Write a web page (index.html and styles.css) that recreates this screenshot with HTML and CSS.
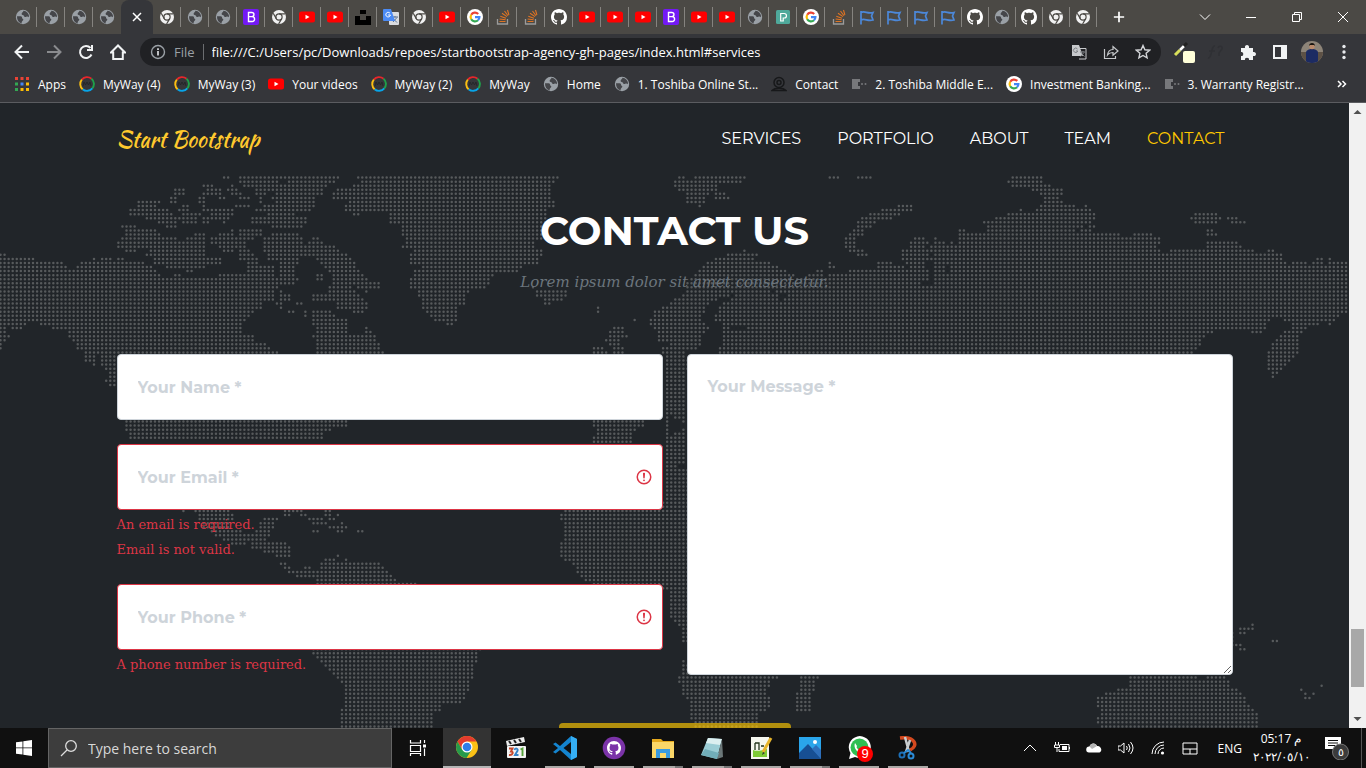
FILE: index.html
```html
<!DOCTYPE html>
<html lang="en">
<head>
<meta charset="utf-8">
<meta name="viewport" content="width=device-width, initial-scale=1">
<title>Agency - Start Bootstrap Theme</title>
<link rel="stylesheet" href="styles.css">
</head>
<body>
<svg class="sprite" aria-hidden="true">
  <symbol id="globe" viewBox="0 0 16 16"><circle cx="8" cy="8" r="7.2" fill="#9aa0a6"/><path d="M2 7.2h3.600c1.300 0 1.500 1 1.500 1.800s1.200.6 1.200 1.600c0 1.400-1.600 1.100-1.700 3.800C3.700 13.500 1.800 11 2 7.200zM8.300 1.800C8.600 3.400 6.500 3.300 6.600 5c.1 1.300 2 .7 2.400 2 .3 1.200 1.500 1.200 2.300.8 1-.5 2-.2 2.700.5A6 6 0 0 0 8.300 1.800z" fill="#45464a"/></symbol>
  <symbol id="chrome-white" viewBox="0 0 16 16"><circle cx="8" cy="8" r="7" fill="#f1f1f1"/><circle cx="8" cy="8" r="3.100" fill="none" stroke="#4b4945" stroke-width="1.200"/><path d="M8 4.900h6.200M5.300 9.600L2.200 4.200M10.700 9.600L7.600 15" stroke="#4b4945" stroke-width="1.200"/></symbol>
  <symbol id="chrome" viewBox="0 0 24 24"><circle cx="12" cy="12" r="11" fill="#fbc116"/><path d="M2.500 6.500A11 11 0 0 1 21.500 6.500H12L7.200 14.800z" fill="#e33b2e"/><path d="M2.500 6.500A11 11 0 0 0 11.500 23L16.700 14.700 7.200 14.700z" fill="#269a4b"/><circle cx="12" cy="12" r="5.500" fill="#fff"/><circle cx="12" cy="12" r="4.300" fill="#2f7de9"/></symbol>
  <symbol id="yt" viewBox="0 0 16 16"><rect y="2.500" width="16" height="11" rx="2.500" fill="#f00"/><path d="M6.500 5.700v4.600L10.500 8z" fill="#fff"/></symbol>
  <symbol id="boot" viewBox="0 0 16 16"><rect width="16" height="16" rx="2" fill="#7319f5"/><path d="M5.500 3.500h3.200c3 0 3 4.100 0 4.100H5.500zM5.500 7.600h3.600c3.300 0 3.300 4.900 0 4.900H5.500z" fill="none" stroke="#fff" stroke-width="1.400"/></symbol>
  <symbol id="unsplash" viewBox="0 0 16 16"><path d="M5 1h6v4H5zM0 7h5v4h6V7h5v9H0z" fill="#000"/></symbol>
  <symbol id="translate" viewBox="0 0 16 16"><rect x="6" y="3" width="10" height="13" rx="1" fill="#dadce0"/><path d="M9 8h6M12 7v1.500M10 13l4-4.500M10.500 10l3.500 3.500" stroke="#5b7290" fill="none"/><path d="M1 0h7l4 12H1a1 1 0 0 1-1-1V1a1 1 0 0 1 1-1z" fill="#4b8bf5"/><path d="M7 4.300A2.300 2.300 0 1 0 7.400 6H5.200" fill="none" stroke="#fff"/></symbol>
  <symbol id="google" viewBox="0 0 16 16"><circle cx="8" cy="8" r="8" fill="#fff"/><g fill="none" stroke-width="2.200"><path d="M4.200 5.800A4.400 4.400 0 0 1 11.200 5" stroke="#ea4335"/><path d="M4.200 5.800a4.400 4.400 0 0 0 0 4.400" stroke="#fbbc05"/><path d="M4.200 10.200A4.400 4.400 0 0 0 11 11.200" stroke="#34a853"/><path d="M8 8.200h4.400A4.400 4.400 0 0 1 11 11.200" stroke="#4285f4"/></g></symbol>
  <symbol id="stack" viewBox="0 0 16 16"><path d="M2.500 10v5h10v-5" fill="none" stroke="#9b9b9b" stroke-width="1.300"/><path d="M4.500 12.500h6M4.600 10l6 .8M5.300 7.200l5.700 2M7 4.200l5 3.400M9.500 2l3.500 4.800M12.500 1l1.400 5" stroke="#e07423" stroke-width="1.100"/></symbol>
  <symbol id="github" viewBox="0 0 16 16"><path fill="currentColor" d="M8 0C3.580 0 0 3.580 0 8c0 3.540 2.290 6.530 5.470 7.590.4.070.55-.17.55-.38 0-.19-.01-.82-.01-1.490-2.010.37-2.530-.49-2.690-.94-.09-.23-.48-.94-.82-1.130-.28-.15-.68-.52-.01-.53.63-.01 1.080.58 1.230.82.72 1.210 1.870.87 2.330.66.070-.52.28-.87.51-1.070-1.780-.2-3.640-.89-3.640-3.950 0-.87.31-1.590.82-2.150-.08-.2-.36-1.020.08-2.120 0 0 .67-.21 2.200.82.64-.18 1.320-.27 2-.27s1.360.09 2 .27c1.530-1.040 2.200-.82 2.200-.82.44 1.100.16 1.920.08 2.120.51.56.82 1.270.82 2.150 0 3.070-1.870 3.750-3.650 3.950.29.25.54.73.54 1.480 0 1.070-.01 1.930-.01 2.200 0 .21.15.46.55.38A8.010 8.010 0 0 0 16 8c0-4.420-3.580-8-8-8z"/></symbol>
  <symbol id="pexel" viewBox="0 0 16 16"><rect x="1" y="1" width="14" height="14" rx="1.500" fill="#4fa99b"/><path d="M5.700 12V4.500h3.500c3 0 3 4.500 0 4.500H8.200v3z" fill="none" stroke="#fff" stroke-width="1.200"/></symbol>
  <symbol id="flag" viewBox="0 0 16 16"><path d="M2 15.500V2M2 3.500c4-2 6 1.500 12 0L12.500 7l1.500 4c-6 1.500-8-2-12 0" fill="none" stroke="#4c88d9" stroke-width="1.700"/></symbol>
  <symbol id="myway" viewBox="0 0 16 16"><g fill="none" stroke-width="1.900"><path d="M2.800 3.600A6.900 6.900 0 0 1 12.500 2.700" stroke="#e6262b"/><path d="M12.500 2.700a6.900 6.900 0 0 1 .8 9.700" stroke="#1fa04a"/><path d="M13.300 12.400a6.900 6.900 0 0 1-9.700.8" stroke="#08a4e8"/><path d="M3.600 13.200a6.900 6.900 0 0 1-.8-9.600" stroke="#fbbf12"/></g><path d="M4 10l1-4 1.500 3L8 6l1.500 3L11 6l1 4" fill="none" stroke="#26272a"/></symbol>
  <symbol id="toshiba" viewBox="0 0 16 16"><path d="M1 3h8v3H7v4h2v3H1z" fill="#77787b"/><circle cx="11" cy="8" r="1" fill="#77787b"/><circle cx="14.500" cy="8" r="1" fill="#77787b"/></symbol>
  <symbol id="cam" viewBox="0 0 16 16"><g fill="none" stroke="#17181a" stroke-width="1.500"><circle cx="8" cy="6.500" r="5"/><circle cx="8" cy="6.500" r="2"/><path d="M1 14.500c3-3 11-3 14 0z"/></g></symbol>
  <symbol id="alert" viewBox="0 0 12 12"><g fill="none" stroke="#dc3545"><circle cx="6" cy="6" r="4.500"/><path stroke-linejoin="round" d="M5.800 3.600h.4L6 6.500z"/></g><circle cx="6" cy="8.200" r=".6" fill="#dc3545"/></symbol>
</svg>

<header class="browser">
  <div class="tabstrip">
    <div class="tabs" id="tabs"></div>
    <button class="newtab" aria-label="New tab"><svg viewBox="0 0 14 14"><path d="M7 1v12M1 7h12" stroke="#fff" stroke-width="2"/></svg></button>
    <div class="winctl">
      <button aria-label="Search tabs"><svg viewBox="0 0 12 12"><path d="M1 3.500l5 5 5-5"/></svg></button>
      <button aria-label="Minimize"><svg viewBox="0 0 12 12"><path d="M1 6.500h10"/></svg></button>
      <button aria-label="Restore"><svg viewBox="0 0 12 12"><path d="M1.500 3.500h7v7h-7zM3.500 3.500v-2h7v7h-2"/></svg></button>
      <button aria-label="Close"><svg viewBox="0 0 12 12"><path d="M1 1l10 10M11 1L1 11"/></svg></button>
    </div>
  </div>

  <div class="toolbar">
    <button class="tool" aria-label="Back"><svg viewBox="0 0 16 16"><path d="M15 8H2M8 1.500L1.500 8 8 14.500"/></svg></button>
    <button class="tool dim" aria-label="Forward"><svg viewBox="0 0 16 16"><path d="M1 8h13M8 1.500L14.500 8 8 14.500"/></svg></button>
    <button class="tool" aria-label="Reload"><svg viewBox="0 0 16 16"><path d="M13.500 10.500A6 6 0 1 1 12.500 4M14 1v5H9"/></svg></button>
    <button class="tool" aria-label="Home"><svg viewBox="0 0 16 16"><path d="M1 8.500L8 1.500l7 7h-2.200V15H3.200V8.500z"/></svg></button>
    <div class="omnibox">
      <svg class="info" viewBox="0 0 16 16"><circle cx="8" cy="8" r="6.500" fill="none" stroke="#9aa0a6" stroke-width="1.400"/><path d="M8 7v4.500M8 4.300v1.600" stroke="#e8eaed" stroke-width="1.600"/></svg>
      <span class="scheme">File</span>
      <input class="url" aria-label="Address" value="file:///C:/Users/pc/Downloads/repoes/startbootstrap-agency-gh-pages/index.html#services">
      <button class="act" aria-label="Translate"><svg viewBox="0 0 16 16"><path d="M1 1h7l4 11H1z" fill="#c7c9cc"/><path d="M6 4.500H15v10.500H8" fill="none" stroke="#c7c9cc"/><path d="M6.500 5A2.200 2.200 0 1 0 6.800 7H5M9 8h5M12 7v1M9.500 12.500L13 8.500M10.500 9.500l3 3" stroke="#7d8084" fill="none"/></svg></button>
      <button class="act" aria-label="Share"><svg viewBox="0 0 16 16"><path d="M1.500 5v9.500h11V12M4.500 11c.5-4 2.500-5.500 5.500-5.500V2.500L15 7l-5 4.200V8.500c-2.500 0-4 .5-5.500 2.500z" fill="none" stroke="#c7c9cc" stroke-width="1.200"/></svg></button>
      <button class="act" aria-label="Bookmark"><svg viewBox="0 0 16 16"><path d="M8 1.500l1.900 4.300 4.700.4-3.500 3.100 1 4.600L8 11.500l-4.100 2.400 1-4.600L1.400 6.200l4.700-.4z" fill="none" stroke="#d3d5d8" stroke-width="1.400"/></svg></button>
    </div>
    <div class="exts">
      <button aria-label="Colour picker"><svg viewBox="0 0 22 22"><path d="M2 14L7 9" stroke="#d9e05a" stroke-width="3"/><path d="M7 9l4-4" stroke="#fff" stroke-width="2.500"/><path d="M11 5l3-3" stroke="#222" stroke-width="3"/><rect x="10" y="10" width="12" height="12" rx="2" fill="#ffffd9"/></svg></button>
      <button aria-label="Math extension"><svg viewBox="0 0 22 22"><path d="M3 17c4 1 3-13 7-12M4 10h6M13 7c1-3 5-2 4 1l-3 4v3" fill="none" stroke="#2f3034" stroke-width="1.500"/></svg></button>
      <button aria-label="Extensions"><svg viewBox="0 0 22 22"><path d="M4 7h4c-1-4 5-4 4 0h4v4c4-1 4 5 0 4v4h-4c1-3-5-3-4 0H4v-4c3 1 3-5 0-4z" fill="#f1f3f4"/></svg></button>
      <button aria-label="Side panel"><svg viewBox="0 0 22 22"><path d="M4 4h14v14H4z" fill="#f1f3f4"/><path d="M6 6h6v10H6z" fill="#35363a"/></svg></button>
      <button aria-label="Profile"><svg viewBox="0 0 22 22"><clipPath id="face"><circle cx="11" cy="11" r="11"/></clipPath><g clip-path="url(#face)"><path d="M0 0h22v22H0z" fill="#8d8478"/><path d="M0 11h22v11H0z" fill="#5d5145"/><path d="M5 22V12c0-3 3-4 6-4s6 1 6 4v10z" fill="#1c2b63"/><circle cx="11" cy="5.500" r="2.700" fill="#b98a6c"/><path d="M8 5c0-4 6-4 6 0l-1-1H9z" fill="#17130f"/></g></svg></button>
      <button aria-label="Menu"><svg viewBox="0 0 22 22"><g fill="#e8eaed"><circle cx="11" cy="5.500" r="1.700"/><circle cx="11" cy="11" r="1.700"/><circle cx="11" cy="16.500" r="1.700"/></g></svg></button>
    </div>
  </div>

  <nav class="bookmarks" aria-label="Bookmarks">
    <a href="#apps"><svg viewBox="0 0 16 16"><path d="M1 1h3v3H1zM6.500 1h3v3h-3zM12 1h3v3h-3z" fill="#ea4335"/><path d="M1 6.500h3v3H1z" fill="#34a853"/><path d="M6.500 6.500h3v3h-3z" fill="#4285f4"/><path d="M12 6.500h3v3h-3zM6.500 12h3v3h-3zM12 12h3v3h-3z" fill="#fbbc05"/><path d="M1 12h3v3H1z" fill="#34a853"/></svg>Apps</a>
    <a href="#m4"><svg><use href="#myway"/></svg>MyWay (4)</a>
    <a href="#m3"><svg><use href="#myway"/></svg>MyWay (3)</a>
    <a href="#yv"><svg><use href="#yt"/></svg>Your videos</a>
    <a href="#m2"><svg><use href="#myway"/></svg>MyWay (2)</a>
    <a href="#m1"><svg><use href="#myway"/></svg>MyWay</a>
    <a href="#home"><svg><use href="#globe"/></svg>Home</a>
    <a href="#t1"><svg><use href="#globe"/></svg>1. Toshiba Online St...</a>
    <a href="#c"><svg><use href="#cam"/></svg>Contact</a>
    <a href="#t2"><svg><use href="#toshiba"/></svg>2. Toshiba Middle E...</a>
    <a href="#ib"><svg><use href="#google"/></svg>Investment Banking...</a>
    <a href="#t3"><svg><use href="#toshiba"/></svg>3. Warranty Registr...</a>
    <button class="more" aria-label="More bookmarks"><svg viewBox="0 0 16 16"><path d="M4 5l3 3-3 3M8.500 5l3 3-3 3" fill="none" stroke="#fff" stroke-width="1.500"/></svg></button>
  </nav>
</header>

<div class="viewport">
  <div class="site">
    <svg class="map" viewBox="0 103 1349 625" preserveAspectRatio="xMidYMin slice" aria-hidden="true"><path id="dots" fill="none" stroke="#575a5c" stroke-width="2.500" stroke-linecap="round"/></svg>
    <nav class="mainnav" aria-label="Main">
      <div class="container navrow">
        <a class="brand" href="#page-top">Start Bootstrap</a>
        <div class="links">
          <a href="#services">SERVICES</a>
          <a href="#portfolio">PORTFOLIO</a>
          <a href="#about">ABOUT</a>
          <a href="#team">TEAM</a>
          <a class="active" href="#contact">CONTACT</a>
        </div>
      </div>
    </nav>
    <main class="container contact" id="contact">
      <h2>CONTACT US</h2>
      <p class="lead">Lorem ipsum dolor sit amet consectetur.</p>
      <form>
        <div class="cols">
          <div class="fields">
            <div class="field"><input type="text" placeholder="Your Name *" aria-label="Your Name"></div>
            <div class="field invalid">
              <div class="box"><input type="email" placeholder="Your Email *" aria-label="Your Email"><svg><use href="#alert"/></svg></div>
              <div class="error">An email is required.</div>
              <div class="error">Email is not valid.</div>
            </div>
            <div class="field invalid">
              <div class="box"><input type="tel" placeholder="Your Phone *" aria-label="Your Phone"><svg><use href="#alert"/></svg></div>
              <div class="error">A phone number is required.</div>
            </div>
          </div>
          <textarea placeholder="Your Message *" aria-label="Your Message"></textarea>
        </div>
        <button class="send" type="submit" disabled aria-label="Send"></button>
      </form>
    </main>
  </div>
  <div class="scroll" aria-hidden="true">
    <svg viewBox="0 0 17 17"><path d="M4.500 11L8.500 7l4 4z" fill="#505050"/></svg>
    <div class="thumb"></div>
    <svg viewBox="0 0 17 17"><path d="M4.500 6l4 4 4-4z" fill="#505050"/></svg>
  </div>
</div>

<footer class="taskbar">
  <button class="start" aria-label="Start"><svg viewBox="0 0 16 16"><path d="M0 2.300L6.500 1.400v6.100H0zM7.300 1.300L16 0v7.500H7.300zM0 8.300h6.500v6.300L0 13.700zM7.300 8.300H16V16l-8.700-1.300z" fill="#fff"/></svg></button>
  <label class="search"><svg viewBox="0 0 18 18"><path d="M1 17l6-6" stroke="#ddd" stroke-width="1.300"/><circle cx="11" cy="7" r="5.300" fill="none" stroke="#ddd" stroke-width="1.300"/></svg><input type="text" placeholder="Type here to search" aria-label="Type here to search"></label>
  <div class="apps">
    <button aria-label="Task View"><svg class="mid" viewBox="0 0 18 18"><path d="M1.500 1v3h10V1M1.500 6.500h10v6h-10zM1.500 17v-2.500h10V17M15.500 1v3M15.500 9.500V17" fill="none" stroke="#fff" stroke-width="1.200"/><path d="M14 5.500h3v3h-3z" fill="#fff"/></svg></button>
    <button class="on" aria-label="Chrome"><svg viewBox="0 0 24 24"><use href="#chrome"/></svg></button>
    <button aria-label="Media Player Classic"><svg viewBox="0 0 24 24"><rect x="3" y="10" width="19" height="12" rx="1" fill="#f4f4f4"/><path d="M2 5l18-4 1 5-18 4z" fill="#eee"/><path d="M5 5l2 3M10 4l2 3M15 3l2 3" stroke="#222" stroke-width="2"/><g fill="none" stroke-width="1.900"><path d="M5 12.500h3.500L7 15.500c3 0 2 4-2 3.500" stroke="#c8472b"/><path d="M10.500 14c.5-2.500 4-1.500 3 .8L11 19h3.500" stroke="#3583c7"/><path d="M16.500 13.500l2-1V20" stroke="#57a33b"/></g></svg></button>
    <button class="run" aria-label="Visual Studio Code"><svg viewBox="0 0 24 24"><path d="M18 0l6 3v18l-6 3L7 14 2.500 17.500 0 16l5-4-5-4 2.500-1.500L7 10z" fill="#1484cf"/><path d="M18 6l-7.500 6 7.500 6z" fill="#101010"/><path d="M18 0l6 3v18l-6 3z" fill="#35aef3"/></svg></button>
    <button class="run" aria-label="GitHub Desktop"><svg viewBox="0 0 24 24"><circle cx="12" cy="12" r="11.300" fill="#7b33a8"/><g color="#fff"><use href="#github" x="5" y="5" width="14" height="14"/></g></svg></button>
    <button class="run multi" aria-label="File Explorer"><svg viewBox="0 0 24 24"><path d="M1 3h9l2 2h11v17H1z" fill="#e5a91d"/><path d="M1 6h22v16H1z" fill="#fbd768"/><path d="M5 13h14v9h-4v-5H9v5H5z" fill="#3a9be0"/></svg></button>
    <button class="run multi" aria-label="Notepad"><svg viewBox="0 0 24 24"><path d="M8 2l14 1-5 20-16-4z" fill="#9bcdd5"/><path d="M8 2l14 1-2 6L6 7z" fill="#dceff0"/><path d="M22 3l1 18-6 2z" fill="#6b7778"/><path d="M1 19l16 4 2-6-14-4z" fill="#72aeb9"/></svg></button>
    <button class="run" aria-label="Notepad++"><svg viewBox="0 0 24 24"><path d="M2 1h18v22H2z" fill="#f5f6ee"/><path d="M4 14c5 2 9 0 14-1v8H4z" fill="#7ecb35"/><path d="M6 7v7M6 7h4v7M12 10h3" stroke="#23351b" stroke-width="1.300" fill="none"/><path d="M22 2l-8 14" stroke="#e8b52b" stroke-width="3"/><path d="M14 16l-1 3 3-2z" fill="#333"/></svg></button>
    <button class="run multi" aria-label="Photos"><svg viewBox="0 0 24 24"><path d="M1 1h22v22H1z" fill="#2aa5ea"/><path d="M1 17L10 8l13 14v1H1z" fill="#174f93"/><path d="M14 13l4-4 5 5v9z" fill="#2e6fba"/><circle cx="17" cy="6" r="2" fill="#fff"/></svg></button>
    <button class="run" aria-label="WhatsApp, 9 unread"><svg viewBox="0 0 24 24"><path d="M2 23l1.500-6A11 11 0 1 1 8 21z" fill="#fff"/><circle cx="12.500" cy="11.500" r="9" fill="#2fbf52"/><path d="M8 7l2 3c0 1-1 1 0 2 1 2 3 3 4 3l1-1 3 1c-1 6-13 0-10-8z" fill="#fff"/></svg><span class="badge">9</span></button>
    <button class="run" aria-label="Snip &amp; Sketch"><svg viewBox="0 0 24 24"><path d="M4 2c15-2 19 8 10 12" fill="none" stroke="#d4491f" stroke-width="3.500"/><path d="M9 1l4 15M14 4l-4 12" stroke="#c9cdd0" stroke-width="2.500"/><circle cx="6" cy="19" r="2.500" fill="none" stroke="#1d70b8" stroke-width="2"/><circle cx="15" cy="20" r="2.500" fill="none" stroke="#2c8bd6" stroke-width="2"/><path d="M8 17l4-3 3 3" fill="none" stroke="#2c8bd6" stroke-width="2"/></svg></button>
  </div>
  <div class="tray">
    <svg viewBox="0 0 16 16"><path d="M2 11l6-6 6 6"/></svg>
    <svg viewBox="0 0 16 16"><path d="M6 4.500h9v7H5V9M15.500 7v2M1.500 2v3M4.500 2v3M.5 5h5v2.500h-5zM3 7.500V12"/><path d="M8 6h5v4H8z" fill="#fff" stroke="none"/></svg>
    <svg viewBox="0 0 16 16"><path d="M3 12.500a3 3 0 0 1 .5-6c1-4 6.500-4 7.500-.5 4-.5 6 5 2.500 6.500z" fill="#fff" stroke="none"/><path d="M3.500 6.500c1-4 6.500-4 7.500-.5L6 9z" fill="#b5b5b5" stroke="none"/></svg>
    <svg viewBox="0 0 16 16"><path d="M0 6h2.500L6 3v10L2.500 10H0zM8.500 6q1.500 2 0 4M10.500 4q3 4 0 8M12.500 2q5 6 0 12"/></svg>
    <svg viewBox="0 0 16 16"><path d="M2 14A12 12 0 0 1 14 2M5 14a9 9 0 0 1 9-9M8 14a6 6 0 0 1 6-6"/><circle cx="12.500" cy="13" r="1.600" fill="#fff" stroke="none"/></svg>
    <svg viewBox="0 0 16 16"><path d="M1 3h14v11H1zM1 9h14M8 9v5"/></svg>
    <span class="lang">ENG</span>
    <time class="clock"><span>05:17 م</span><span>٢٠٢٢/٠٥/١٠</span></time>
    <button class="notes" aria-label="Notifications"><svg viewBox="0 0 24 24"><path d="M0 1h16v12h-5l-3 3v-3H0z" fill="#fff" stroke="none"/><path d="M3 4.500h10M3 7h10M3 9.500h7" stroke="#101010"/><circle cx="15.500" cy="16" r="8" fill="#3b3b3b" stroke="#777"/></svg><span>٥</span></button>
  </div>
</footer>
<script src="map.js"></script>
</body>
</html>
```
FILE: styles.css
```css
* { box-sizing: border-box; }
html, body { height: 100%; }
body { margin: 0; display: flex; flex-direction: column; overflow: hidden; font-family: "Segoe UI", "Open Sans", "Noto Sans", sans-serif; font-size: 12px; background: #212529; }
button { border: 0; padding: 0; background: none; color: inherit; font: inherit; display: flex; align-items: center; justify-content: center; }
input, textarea { font: inherit; border: 0; outline: 0; min-width: 0; }
a { color: inherit; text-decoration: none; }
.sprite { display: none; }

/* browser chrome */
.browser { flex: none; background: #35363a; color: #fff; border-bottom: 1px solid #5b5c60; }
.tabstrip { display: flex; align-items: center; height: 34px; background: #4b4945; padding-left: 9px; }
.tabs { display: flex; height: 34px; align-items: center; min-width: 0; overflow: hidden; }
.tab { flex: none; width: 28px; display: flex; align-items: center; justify-content: center; height: 20px; border-right: 1px solid #85837f; color: #fff; }
.tab:nth-last-child(-n+8) { width: 27px; }
.tab svg { width: 16px; height: 16px; flex: none; }
.tab.current { width: 32px; height: 34px; background: #35363a; border: 0; border-radius: 8px 8px 0 0; }
.tab.current svg { width: 10px; height: 10px; }
.tab.before { border-right: 0; }
.newtab { width: 44px; height: 34px; flex: none; }
.newtab svg { width: 12px; height: 12px; }
.winctl { display: flex; flex: none; margin-left: auto; }
.winctl button { width: 46px; height: 28px; }
.winctl svg { width: 12px; height: 12px; fill: none; stroke: #fff; }

.toolbar { display: flex; align-items: center; height: 36px; padding: 0 6px; }
.tool { width: 32px; height: 32px; flex: none; }
.tool svg { width: 16px; height: 16px; fill: none; stroke: #f1f3f4; stroke-width: 2; }
.dim { opacity: .45; }
.omnibox { flex: 1; display: flex; align-items: center; height: 28px; margin-left: 6px; border-radius: 14px; background: #202124; padding: 0 10px; }
.info { width: 16px; height: 16px; flex: none; }
.scheme { margin-left: 8px; padding-right: 8px; border-right: 1px solid #6b6d70; color: #9aa0a6; font-size: 13px; line-height: 16px; }
.url { flex: 1; background: none; color: #fff; font-size: 13px; padding: 0 8px; }
.act { width: 32px; flex: none; }
.act svg { width: 16px; height: 16px; }
.act:last-child { margin-right: -8px; }
.exts { display: flex; margin-left: 7px; }
.exts button { width: 32px; height: 28px; }
.exts svg { width: 22px; height: 22px; }

.bookmarks { display: flex; align-items: center; height: 32px; padding: 0 16px 4px 14px; gap: 13px; white-space: nowrap; }
.bookmarks a { display: flex; align-items: center; gap: 8px; }
.bookmarks svg { width: 16px; height: 16px; flex: none; }
.more { margin-left: auto; }

/* page */
.viewport { flex: 1; display: flex; min-height: 0; }
.site { position: relative; flex: 1; overflow: hidden; background: #212529; }
.map { position: absolute; inset: 0; width: 100%; height: 100%; }
.container { width: 100%; max-width: 1140px; margin: 0 auto; padding: 0 12px; }
.mainnav { position: relative; background: #212529; }
.navrow { display: flex; align-items: center; justify-content: space-between; height: 72px; }
.brand { color: #ffc92e; font: 22px/32px "Kaushan Script", "Liberation Serif", serif; }
.links { display: flex; gap: 36px; padding-right: 8px; color: #fff; font: 16px/24px Montserrat, Inter, sans-serif; }
.links .active { color: #ffc800; }
.contact { position: relative; }
h2 { margin: 0; padding: 32px 0 8px; color: #fff; text-align: center; font: 700 40px/48px Montserrat, Inter, sans-serif; }
.lead { margin: 0 0 60px; padding-top: 7px; color: #6c757d; text-align: center; font: italic 15px/24px "Roboto Slab", "DejaVu Serif", serif; }
.cols { display: grid; grid-template-columns: 1fr 1fr; gap: 24px; }
.fields { display: flex; flex-direction: column; gap: 24px; }
.box { position: relative; }
.field input, textarea { display: block; width: 100%; padding: 20px; border: 1px solid #ced4da; border-radius: 4px; background: #fff; color: #212529; font: 700 16px/24px Montserrat, Inter, sans-serif; }
.field input { height: 66px; }
textarea { height: 100%; }
.field input::placeholder, textarea::placeholder { color: #ced4da; opacity: 1; }
.invalid input { border-color: #dc3545; }
.box svg { position: absolute; right: 10px; top: 24px; width: 18px; height: 18px; }
.error { margin-top: 4px; color: #dc3545; font: 13px/21px "Roboto Slab", "DejaVu Serif", serif; }
.send { width: 232px; height: 66px; margin: 48px auto 0; border-radius: 4px; background: #ffc800; opacity: .65; }

.scroll { display: flex; flex-direction: column; flex: none; width: 17px; background: #f1f1f1; }
.scroll svg { width: 17px; height: 17px; }
.thumb { height: 58px; margin: auto 2px 24px; background: #a8a8a8; }

/* taskbar */
.taskbar { flex: none; display: flex; height: 40px; background: #101010; color: #fff; }
.start { width: 48px; flex: none; }
.start svg { width: 16px; height: 16px; }
.search { display: flex; align-items: center; width: 344px; padding: 0 11px; gap: 10px; border: 1px solid #646464; background: #3d3d3d; }
.search svg { width: 18px; height: 18px; flex: none; }
.search input { flex: 1; background: none; padding: 0; font-size: 14px; }
.search input::placeholder { color: #d8d8d8; opacity: 1; }
.apps { display: flex; gap: 1px; padding-left: 1px; }
.apps button { position: relative; width: 48px; }
.apps button:first-child { width: 49px; }
.apps svg { width: 24px; height: 24px; }
.apps .mid { width: 18px; height: 18px; }
.apps .on { background: #333; border-bottom: 2px solid #b5b5b5; }
.apps .run::after { content: ""; position: absolute; left: 4px; right: 4px; bottom: 0; height: 2px; background: #aaa8a6; }
.apps .multi::after { border-right: 8px solid #777; }
.badge { position: absolute; left: 22px; top: 18px; width: 16px; height: 16px; border-radius: 8px; background: #f00; font: 13px/16px "Liberation Sans", sans-serif; text-align: center; }
.tray { display: flex; align-items: center; margin-left: auto; gap: 16px; padding-right: 4px; }
.tray svg { width: 16px; height: 16px; fill: none; stroke: #fff; stroke-width: 1; }
.lang { margin-left: 4px; }
.clock { display: flex; flex-direction: column; width: 56px; margin-left: -5px; text-align: center; line-height: 18px; white-space: nowrap; }
.notes { position: relative; height: 40px; padding-right: 12px; border-right: 1px solid #555; }
.tray .notes svg { width: 24px; height: 24px; }
.notes span { position: absolute; left: 8px; top: 16px; width: 16px; font-size: 11px; line-height: 16px; text-align: center; }
```
FILE: map.js
```js
// Tab favicons, in strip order.
const order = "globe globe globe globe * chrome-white globe globe boot chrome-white yt yt unsplash translate chrome-white yt google stack stack github yt yt yt boot yt yt globe pexel google stack flag flag flag flag github globe github chrome-white chrome-white".split(" ");
document.getElementById("tabs").innerHTML = order.map((n, i) =>
  n === "*"
    ? '<div class="tab current"><svg viewBox="0 0 10 10"><path d="M1 1l8 8M9 1L1 9" stroke="#fff" stroke-width="1.500"/></svg></div>'
    : `<div class="tab${order[i + 1] === "*" ? " before" : ""}"><svg><use href="#${n}"/></svg></div>`
).join("");

// Dotted world map. Each sheet has an origin; outlines on it are at three times map scale.
const sheets = [
  { x: 0, y: 105, land: [
    "0,440 20,440 20,455 105,455 105,465 180,465 205,480 205,492 220,492 240,470 270,468 282,455 290,468 315,456 335,456 345,465 368,455 380,466 420,466 450,480 460,490 480,510 515,515 530,505 545,512 590,512 630,515 680,505 715,508 740,505 745,478 720,465 715,430 735,410 750,440 780,455 775,480 820,485 820,515 838,545 822,560 822,590 790,595 785,610 762,620 735,645 725,660 725,690 760,690 765,705 800,712 815,730 840,745 840,900 1035,940 1045,965 995,975 975,985 970,1000 390,1010 375,975 375,950 350,935 350,845 330,845 315,828 330,800 300,785 305,760 280,745 290,790 275,780 255,770 255,745 230,730 230,715 205,695 190,670 155,672 145,660 105,655 95,648 75,660 65,672 35,672 25,665 20,680 32,700 10,720 0,738",
    "365,360 405,358 410,370 470,370 485,390 530,400 545,415 560,400 580,395 585,385 615,385 615,400 612,430 615,455 665,460 660,478 600,490 570,500 495,490 500,478 460,475 460,460 440,450 445,430 435,425 405,440 375,440 372,430 352,425 355,405 375,395",
    "388,310 410,305 415,290 430,285 480,285 480,295 465,300 495,310 520,330 545,330 535,310 550,298 568,300 568,320 605,320 605,335 590,340 590,358 530,350 530,370 500,367 505,355 475,355 470,340 435,340 435,330 388,333",
    "510,292 510,275 522,255 522,248 555,248 555,272 535,272 530,294",
    "596,295 598,270 610,270 610,258 620,255 608,245 608,235 642,238 645,252 665,255 665,270 680,275 675,285 655,278 650,270 620,270 615,296",
    "608,300 615,300 625,308 702,308 702,330 685,345 675,358 665,345 635,345 630,357 608,357 608,338 625,338 635,325 605,315",
    "680,248 692,248 692,236 705,236 705,250 725,260 725,272 752,274 752,284 715,284 700,270 680,265",
    "665,210 690,210 690,222 668,222",
    "705,210 1022,210 1018,220 990,238 970,250 970,270 945,278 945,300 930,320 880,325 920,335 920,355 905,370 815,368 815,357 755,355 755,335 800,330 800,325 765,322 765,312 790,312 790,298 830,295 810,285 815,270 830,262 800,258 800,275 785,270 785,295 778,295 778,270 765,268 760,255 735,248 730,240 715,230",
    "705,298 752,298 752,308 705,308",
    "718,372 790,372 790,388 770,395 760,405 745,405 740,425 715,430 690,442 670,438 665,428 640,418 632,410 632,398 655,400 658,385 690,385 697,372 705,380 700,395 718,395",
    "790,400 820,385 895,385 900,398 910,400 905,420 925,420 930,398 960,398 965,410 1000,422 1010,435 1030,440 1060,465 1068,490 1100,515 1105,530 1140,532 1140,552 1110,555 1110,575 1095,565 1060,540 1060,555 1085,570 1105,590 1105,610 1080,625 1050,620 1010,612 1010,590 985,585 930,588 925,572 985,565 985,545 1000,530 1000,505 985,500 985,490 960,485 965,475 940,460 895,460 895,475 885,490 885,505 895,520 890,535 845,540 825,520 840,515 840,475 830,465 800,462 800,440 790,440",
    "948,508 970,508 970,528 948,528",
    "836,556 848,556 850,570 870,570 872,585 905,590 905,600 890,600 885,590 850,590 850,612 836,612 828,600 828,590 838,590",
    "935,618 960,620 990,618 1000,630 1040,645 1045,685 1085,685 1100,665 1110,675 1130,690 1135,715 1145,730 1155,745 1155,800 950,800 945,740 950,720 938,695 945,680 935,655",
    "863,615 885,615 885,627 863,627", "910,615 920,615 920,636 910,636",
    "1060,212 1680,212 1678,222 1655,240 1655,285 1665,290 1662,308 1640,312 1635,330 1650,345 1640,390 1600,420 1630,435 1630,452 1615,460 1615,478 1580,480 1555,500 1495,505 1470,525 1460,550 1430,550 1410,555 1395,580 1395,595 1375,605 1370,648 1350,662 1340,655 1305,650 1300,640 1280,625 1265,605 1265,585 1255,580 1255,555 1230,550 1230,525 1240,500 1265,490 1265,478 1230,475 1230,450 1240,430 1205,430 1220,410 1205,385 1205,360 1170,355 1165,330 1155,322 1085,320 1080,330 1060,330 1060,320 1035,318 1025,300 1040,290 1020,280 1000,280 1000,265 1010,250 1060,250 1060,240 1080,230"
  ], water: ["840,226 860,226 860,236 840,236"] },
  { x: 455, y: 165, land: [
    "230,365 245,372 335,374 335,400 325,408 290,410 285,420 265,415 260,400 245,395",
    "426,420 436,420 436,446 426,446",
    "658,45 670,33 690,33 692,45 720,45 720,33 877,33 870,45 850,55 790,55 790,78 770,78 750,95 750,115 735,128 718,118 695,115 697,82 672,75 658,65",
    "780,80 815,80 826,98 812,114 800,104 780,104",
    "1120,33 1160,33 1160,43 1120,43", "1206,33 1255,33 1255,43 1206,43",
    "1375,116 1345,116 1295,130 1255,142 1220,158 1205,178 1175,208 1170,240 1180,260 1215,274 1242,274 1242,262 1215,255 1205,240 1205,220 1230,210 1225,195 1250,185 1265,170 1310,160 1345,145 1378,140",
    "470,483 510,483 510,500 520,515 500,525 500,545 512,560 512,600 475,600 475,555 460,540 450,525 460,505",
    "413,545 450,545 450,555 460,560 455,600 413,600",
    "585,465 600,435 625,425 650,410 685,385 690,360 710,330 745,305 760,290 800,275 830,265 865,258 870,250 880,262 912,262 912,275 890,280 935,290 970,305 1000,320 1020,330 1010,345 1060,330 1080,315 1105,318 1110,335 1135,325 1200,316 1255,312 1280,312 1280,620 692,620 695,900 632,900 632,580 620,560 625,545 645,535 630,525 615,530 600,520 600,490 585,475"
  ], water: [
    "780,405 820,395 840,380 840,400 805,412 785,430 780,465 800,480 805,500 795,515 805,530 790,545 780,580 690,580 685,565 725,550 740,530 745,510 760,490 742,465 752,430 755,420",
    "825,483 880,483 880,495 825,495", "975,385 1000,385 1000,400 970,405", "950,375 962,375 962,385 950,385",
    "640,750 700,780 680,790 650,810 640,800"
  ], spots: "541,464 1125,294 1125,306 1137,306" },
  { x: 880, y: 105, land: [
    "-10,468 40,468 45,480 65,485 90,488 65,470 70,455 65,435 90,430 92,410 105,395 135,396 148,410 150,420 165,395 185,410 205,420 215,405 235,420 238,370 260,372 262,385 320,385 320,370 310,360 310,347 345,345 350,335 385,332 385,322 420,320 425,310 432,320 465,320 480,300 495,290 480,275 470,265 450,258 445,248 395,245 385,230 400,210 480,210 492,235 515,237 520,250 552,250 540,285 560,300 610,305 620,298 640,315 650,325 640,350 650,362 640,375 640,385 710,383 720,393 760,393 765,383 820,383 825,393 845,395 845,420 835,425 850,445 870,440 875,420 885,430 970,430 985,408 1075,408 1090,425 1115,435 1125,443 1160,445 1170,432 1185,435 1215,450 1215,465 1230,480 1240,470 1280,468 1290,480 1310,458 1330,458 1330,475 1345,480 1350,458 1360,468 1410,468 1410,625 1380,630 1365,650 1340,662 1335,650 1285,670 1260,685 1260,735 1245,760 1220,785 1200,800 1182,822 1165,795 1165,740 1180,715 1210,685 1235,665 1240,650 1215,648 1210,635 1175,640 1165,655 1150,685 1120,685 1100,665 1085,675 1010,672 985,690 965,705 955,735 930,750 930,800 -10,800",
    "933,340 945,323 1015,323 1028,340 1015,357 945,357",
    "1042,334 1075,334 1078,346 1102,346 1102,358 1055,358 1055,346 1042,346",
    "970,372 1005,372 1017,392 983,392"
  ], water: ["138,415 150,415 150,445 160,455 150,465 160,485 160,525 152,542 126,542 126,530 148,525 148,500 135,495 138,480 145,450", "188,480 210,484 206,504", "586,370 602,370 602,380 586,380", "615,358 625,358 625,370 615,370"] },
  { x: 0, y: 410, land: [
    "580,298 690,298 702,318 700,330 690,345 705,360 750,368 775,358 780,335 795,325 835,325 825,355 810,360 810,380 800,393 760,393 725,405 695,405 680,395 655,380 635,370 605,350 597,325",
    "755,395 860,395 874,410 872,440 830,440 825,430 790,430 785,418 755,416",
    "850,446 858,458 880,475 900,490 915,468 935,470 945,485 960,485 960,460 975,446 1000,446 1030,455 1040,443 1055,455 1100,460 1110,456 1130,458 1155,470 1165,485 1190,510 1240,518 1460,620 1450,715 1435,730 1432,745 1422,770 1420,805 1410,830 1395,865 1370,885 1325,885 1320,900 1300,915 1300,960 1020,960 1020,910 1035,880 1035,825 1010,800 985,785 965,760 940,735 935,720 935,560 950,520 945,500 905,505 865,490 850,475 840,462",
    "850,298 905,298 920,320 905,320 895,308 872,308 870,322 850,322",
    "923,322 965,325 985,340 975,346 938,346", "973,298 995,298 995,320 1008,325 1008,334 985,334 985,322 973,318", "985,346 1045,346 1045,358 985,358"
  ], spots: "550,303 1015,315 1027,340 1015,364 1027,364 942,364 954,364 1077,364 1089,364 1015,437" },
  { x: 450, y: 420, land: [
    "428,-10 585,-10 585,20 555,30 548,72 428,72 428,45 440,40 428,20",
    "640,85 670,85 682,100 670,110 682,135 690,145 730,145 900,300 900,700 712,670 697,665 697,640 685,615 662,595 660,515 640,510 600,495 430,495 410,485 380,455 370,430 345,425 332,410 332,370 345,360 345,305 330,300 330,285 345,270 345,240 640,240",
    "700,720 712,760 690,765 690,740"
  ] },
  { x: 680, y: 670, land: [
    "0,-20 320,-20 300,25 275,35 270,48 258,60 258,75 268,80 268,112 255,126 235,126 235,180 40,180 40,155 28,150 28,95 16,85 5,65 -3,40",
    "358,-20 425,-20 422,25 412,35 412,62 400,70 400,112 388,126 346,126 346,66 358,60"
  ] },
  { x: 1000, y: 600, land: [
    "390,225 595,225 600,240 620,240 622,226 680,226 692,245 692,262 712,264 728,280 740,305 765,325 778,350 778,390 305,390 295,372 280,360 295,345 293,290 315,288 320,278 355,276 355,264 390,262"
  ], spots: "760,75 724,87 736,87 748,87 760,87 724,99 736,99 700,99 700,112 700,124 700,136 712,136 724,136 724,148 736,148 821,124 834,124 968,258 907,270 919,283 944,283 919,295 931,295" }
];

const PITCH = 4.065, X0 = 0.5, Y0 = 177.6;
const parse = (s, o) => s.trim().split(" ").map(p => {
  const [x, y] = p.split(",").map(Number);
  return [o.x + x / 3, o.y + y / 3];
});
function inside(px, py, poly) {
  let hit = false;
  for (let i = 0, j = poly.length - 1; i < poly.length; j = i++) {
    const [xi, yi] = poly[i], [xj, yj] = poly[j];
    if ((yi > py) !== (yj > py) && px < (xj - xi) * (py - yi) / (yj - yi) + xi) hit = !hit;
  }
  return hit;
}
const cells = new Set();
function mark(poly, on) {
  const xs = poly.map(p => p[0]), ys = poly.map(p => p[1]);
  for (let r = Math.floor((Math.min(...ys) - Y0) / PITCH); r <= (Math.max(...ys) - Y0) / PITCH; r++)
    for (let c = Math.floor((Math.min(...xs) - X0) / PITCH); c <= (Math.max(...xs) - X0) / PITCH; c++)
      if (inside(X0 + c * PITCH, Y0 + r * PITCH, poly)) on ? cells.add(c + "," + r) : cells.delete(c + "," + r);
}
for (const s of sheets) s.land.forEach(p => mark(parse(p, s), true));
for (const s of sheets) {
  (s.water || []).forEach(p => mark(parse(p, s), false));
  if (s.spots) parse(s.spots, s).forEach(([x, y]) => cells.add(Math.round((x - X0) / PITCH) + "," + Math.round((y - Y0) / PITCH)));
}
document.getElementById("dots").setAttribute("d", [...cells].map(k => {
  const [c, r] = k.split(",").map(Number);
  return `M${(X0 + c * PITCH).toFixed(2)} ${(Y0 + r * PITCH).toFixed(2)}h0`;
}).join(""));
```
